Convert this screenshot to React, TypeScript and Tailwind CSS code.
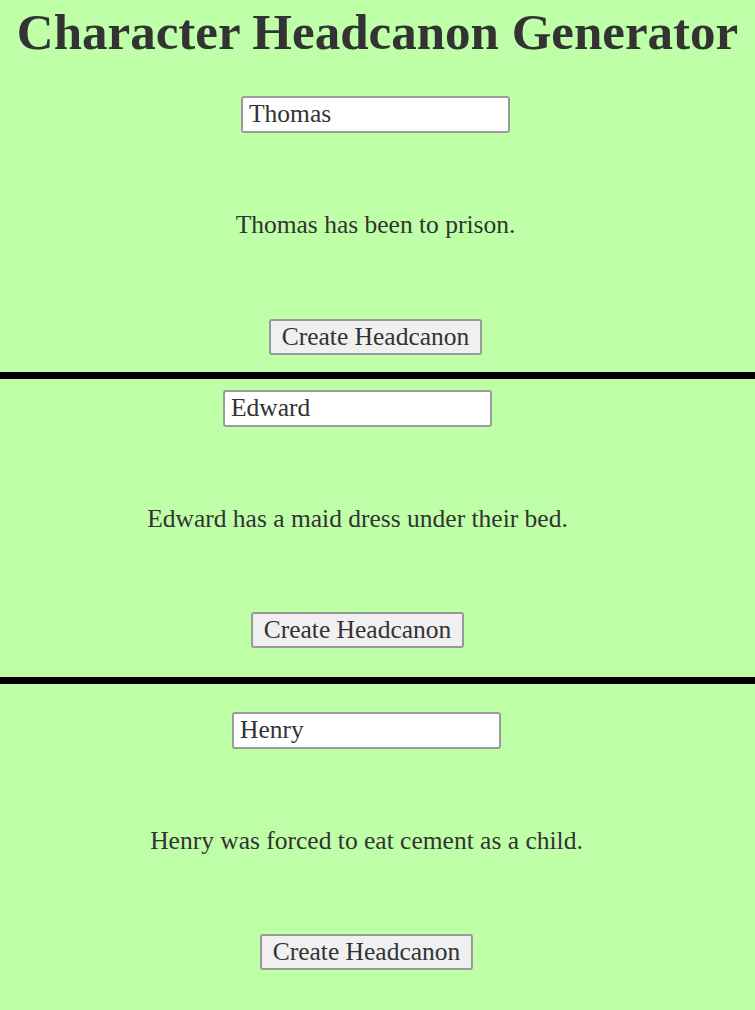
import { useState } from "react";

const SERIF = { fontFamily: '"Liberation Serif", "Times New Roman", serif' };

type Sec = {
  name: string;
  canon: string;
  top: string; // input top margin
  btn: string; // button top margin
  shift: string; // horizontal offset
  bottom: string;
};

const SECTIONS: Sec[] = [
  { name: "Thomas", canon: "Thomas has been to prison.", top: "mt-[34px]", btn: "mt-[79px]", shift: "pr-[4px]", bottom: "pb-[17px]" },
  { name: "Edward", canon: "Edward has a maid dress under their bed.", top: "mt-[11px]", btn: "mt-[78px]", shift: "pr-[40px]", bottom: "pb-[29px]" },
  { name: "Henry", canon: "Henry was forced to eat cement as a child.", top: "mt-[28px]", btn: "mt-[78px]", shift: "pr-[22px]", bottom: "pb-[40px]" },
];

function Generator({ s }: { s: Sec }) {
  const [name, setName] = useState(s.name);
  return (
    <div className={`flex flex-col items-center ${s.shift} ${s.bottom}`}>
      <input
        value={name}
        onChange={(e) => setName(e.target.value)}
        className={`${s.top} w-[269px] h-[37px] bg-white border-2 border-[#9b9b9b] rounded-[3px] px-[6px] text-[25.5px] text-[#333] outline-none`}
        style={SERIF}
      />
      <p className="mt-[77px] text-[25.5px] leading-[30px] text-[#333]">{s.canon}</p>
      <button
        className={`${s.btn} h-[36px] px-[11px] bg-[#f0f0f0] border-2 border-[#999] rounded-[3px] text-[25.5px] leading-none text-[#333]`}
        style={SERIF}
      >
        Create Headcanon
      </button>
    </div>
  );
}

export default function App() {
  return (
    <div className="min-h-[1010px] bg-[#bfffa7] text-[#333]" style={SERIF}>
      <h1 className="text-center font-bold text-[51px] leading-[60px] pt-[2px] text-[#333]">
        Character Headcanon Generator
      </h1>
      {SECTIONS.map((s, i) => (
        <div key={s.name}>
          {i > 0 && <div className="h-[7px] bg-black" />}
          <Generator s={s} />
        </div>
      ))}
    </div>
  );
}
